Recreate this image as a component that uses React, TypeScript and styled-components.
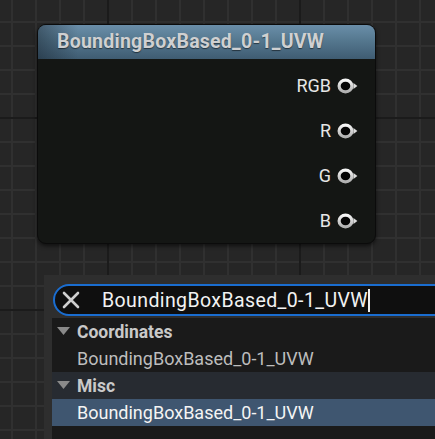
import React from "react";
import styled, { createGlobalStyle } from "styled-components";

const Global = createGlobalStyle`
  html, body { margin: 0; padding: 0; background: #262626; }
  body { width: 435px; height: 439px; overflow: hidden; font-family: Roboto, "Liberation Sans", sans-serif; }
`;

const Canvas = styled.div`
  position: relative;
  width: 435px;
  height: 439px;
  overflow: hidden;
  background-color: #262626;
  background-image:
    linear-gradient(to right, #1b1b1b 2px, transparent 2px),
    linear-gradient(to bottom, #1b1b1b 2px, transparent 2px),
    linear-gradient(to right, #303030 2px, transparent 2px),
    linear-gradient(to bottom, #303030 2px, transparent 2px);
  background-size: 192px 192px, 192px 192px, 24px 24px, 24px 24px;
  background-position: 107px 0, 0 117px, 11px 0, 0 21px;
`;

const Node = styled.div`
  position: absolute;
  left: 37px;
  top: 24px;
  width: 339px;
  height: 220px;
  box-sizing: border-box;
  border-radius: 9px;
  border: 1px solid #0b0b0b;
  background: #141614;
  box-shadow: 0 2px 4px rgba(0, 0, 0, 0.6);
  overflow: hidden;
  display: flex;
  flex-direction: column;
`;

const Header = styled.div`
  position: relative;
  height: 34px;
  flex: none;
  display: flex;
  align-items: center;
  padding-left: 19px;
  padding-bottom: 2px;
  box-sizing: border-box;
  background:
    linear-gradient(to right, rgba(20, 30, 40, 0.45) 0px, rgba(20, 30, 40, 0) 40px),
    linear-gradient(to bottom, #6a8ea9 0%, #55788f 45%, #3f5c72 100%);
  color: #cfd0d1;
  font-weight: 700;
  font-size: 19.5px;
  letter-spacing: 0.25px;
  text-shadow: 0 1px 1px rgba(0, 0, 0, 0.5);
`;

const Body = styled.div`
  display: flex;
  flex-direction: column;
  align-items: flex-end;
  padding: 4px 16px 0 0;
`;

const PinRow = styled.div`
  height: 45px;
  display: flex;
  align-items: center;
  gap: 6px;
  color: #e6e6e6;
  font-size: 18px;
`;

const PinIcon = () => (
  <svg width="22" height="16" viewBox="0 0 22 16">
    <defs>
      <linearGradient id="pg" x1="0" y1="0" x2="0" y2="1">
        <stop offset="0" stopColor="#f6f6f6" />
        <stop offset="1" stopColor="#b0b0b0" />
      </linearGradient>
    </defs>
    <ellipse cx="8.5" cy="8" rx="6.4" ry="5.8" fill="#050505" stroke="url(#pg)" strokeWidth="3.2" />
    <path d="M16.4 5 L20.4 8 L16.4 11 Z" fill="#dcdcdc" />
  </svg>
);

const Panel = styled.div`
  position: absolute;
  left: 44px;
  top: 275px;
  right: -40px;
  bottom: 0;
  background: #2e2e2e;
  padding: 9px 0 0 8px;
  display: flex;
  flex-direction: column;
`;

const SearchBox = styled.div`
  height: 32px;
  box-sizing: border-box;
  margin-left: 1px;
  border: 2px solid #1a6dd0;
  border-radius: 16px;
  background: #0f0f0f;
  display: flex;
  align-items: center;
  padding-left: 7px;
  color: #f2f2f2;
  font-size: 19.5px;
  letter-spacing: 0.4px;
`;

const ClearIcon = () => (
  <svg width="18" height="18" viewBox="0 0 18 18">
    <path d="M2 2 L16 16 M16 2 L2 16" stroke="#cfcfcf" strokeWidth="2.6" strokeLinecap="round" />
  </svg>
);

const SearchText = styled.span`
  margin-left: 22px;
  display: flex;
  align-items: center;
`;

const Caret = styled.span`
  display: inline-block;
  width: 2px;
  height: 23px;
  background: #f0f0f0;
  margin-left: 0;
`;

const List = styled.div`
  margin-top: 2px;
  flex: 1;
  background: #1a1a1a;
  display: flex;
  flex-direction: column;
`;

const Category = styled.div<{ $alt?: boolean }>`
  height: 27px;
  display: flex;
  align-items: center;
  padding-left: 5px;
  gap: 7px;
  background: ${(p) => (p.$alt ? "#272b31" : "transparent")};
  color: #c9c9c9;
  font-weight: 700;
  font-size: 17.5px;
`;

const Item = styled.div<{ $selected?: boolean }>`
  height: 27px;
  display: flex;
  align-items: center;
  padding-left: 25px;
  background: ${(p) => (p.$selected ? "#3f5670" : "transparent")};
  color: ${(p) => (p.$selected ? "#f4f4f4" : "#bdbdbd")};
  font-size: 18px;
`;

const Arrow = () => (
  <svg width="13" height="9" viewBox="0 0 13 9">
    <path d="M0 0 L13 0 L6.5 8 Z" fill="#8a8a8a" />
  </svg>
);

const NAME = "BoundingBoxBased_0-1_UVW";

export default function App() {
  return (
    <>
      <Global />
      <Canvas>
        <Node>
          <Header>{NAME}</Header>
          <Body>
            {["RGB", "R", "G", "B"].map((p) => (
              <PinRow key={p}>
                <span>{p}</span>
                <PinIcon />
              </PinRow>
            ))}
          </Body>
        </Node>
        <Panel>
          <SearchBox>
            <ClearIcon />
            <SearchText>
              {NAME}
              <Caret />
            </SearchText>
          </SearchBox>
          <List>
            <Category>
              <Arrow />
              Coordinates
            </Category>
            <Item>{NAME}</Item>
            <Category $alt>
              <Arrow />
              Misc
            </Category>
            <Item $selected>{NAME}</Item>
          </List>
        </Panel>
      </Canvas>
    </>
  );
}
